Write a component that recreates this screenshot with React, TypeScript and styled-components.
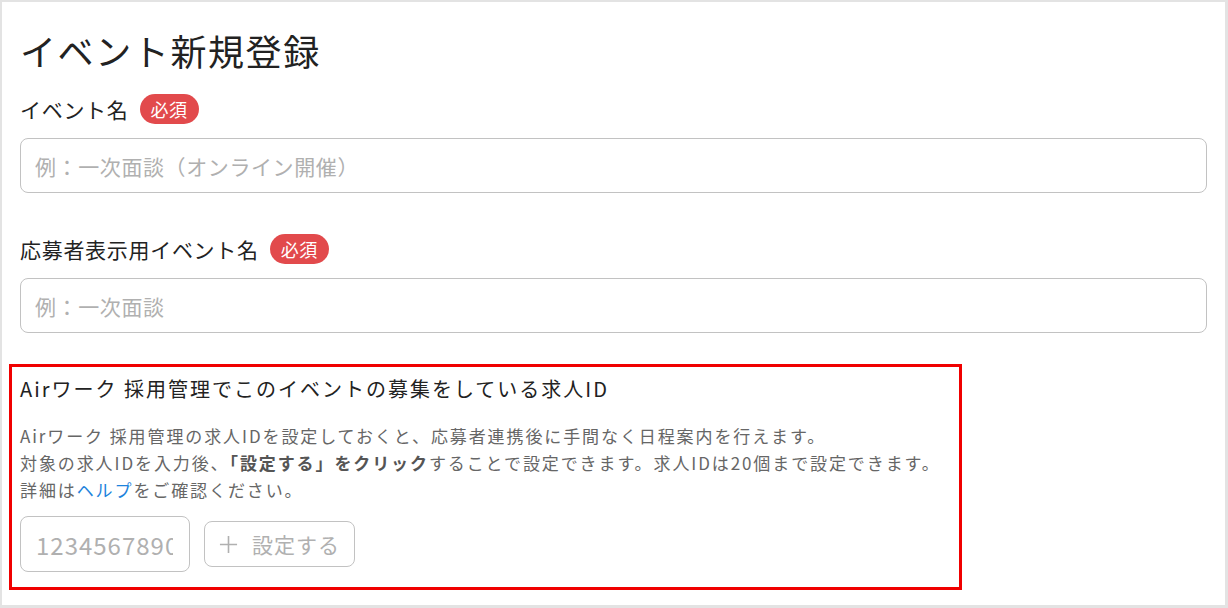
import React from "react";
import styled, { createGlobalStyle } from "styled-components";

const GlobalStyle = createGlobalStyle`
  html, body {
    margin: 0;
    padding: 0;
    background: #ffffff;
  }
  body {
    font-family: "Noto Sans CJK JP", "Noto Sans", sans-serif;
    color: #222222;
  }
`;

const Frame = styled.div`
  box-sizing: border-box;
  width: 1228px;
  height: 608px;
  border: 2px solid #e3e3e3;
  border-right-width: 3px;
  border-bottom-width: 3px;
  padding: 24px 18px 0 18px;
  overflow: hidden;
`;

const Title = styled.h1`
  margin: 0;
  font-size: 36px;
  font-weight: 400;
  line-height: 48px;
  letter-spacing: 1.6px;
  color: #222222;
`;

const LabelRow = styled.div<{ $gap: number }>`
  display: flex;
  align-items: center;
  gap: 11px;
  margin-top: ${(p) => p.$gap}px;
  height: 30px;
`;

const Label = styled.span`
  font-size: 21px;
  letter-spacing: 0.7px;
  color: #222222;
`;

const Required = styled.span`
  display: inline-flex;
  align-items: center;
  justify-content: center;
  height: 30px;
  padding: 0 11px;
  border-radius: 15px;
  background: #e24a4c;
  color: #ffffff;
  font-size: 18px;
  letter-spacing: 0.5px;
`;

const TextInput = styled.input<{ $width?: number; $height?: number }>`
  box-sizing: border-box;
  display: block;
  width: ${(p) => (p.$width ? `${p.$width}px` : "100%")};
  height: ${(p) => p.$height ?? 55}px;
  margin-top: 14px;
  padding: 0 14px;
  border: 1.5px solid #c2c2c2;
  border-radius: 8px;
  font-family: inherit;
  font-size: 21px;
  letter-spacing: 0.6px;
  color: #222222;
  outline: none;
  &::placeholder {
    color: #b0b0b0;
  }
`;

const JobSection = styled.section`
  box-sizing: border-box;
  width: 953px;
  margin: 31px 0 0 -11px;
  padding: 8px 8px 15px 8px;
  border: 3px solid #f00000;
`;

const SectionTitle = styled.h2`
  margin: 0;
  font-size: 20px;
  font-weight: 400;
  line-height: 28px;
  letter-spacing: 2px;
  color: #222222;
`;

const Description = styled.p`
  margin: 19px 0 0 0;
  font-size: 17px;
  line-height: 27px;
  letter-spacing: 1.9px;
  color: #666666;
`;

const Strong = styled.strong`
  font-weight: 700;
  color: #555555;
`;

const HelpLink = styled.a`
  color: #1d83dc;
  text-decoration: none;
`;

const IdRow = styled.div`
  display: flex;
  align-items: center;
  gap: 14px;
  margin-top: 13px;
`;

const IdInput = styled(TextInput)`
  margin-top: 0;
  padding: 0 16px 0 15px;
  font-size: 24px;
  letter-spacing: 1px;
`;

const AddButton = styled.button`
  box-sizing: border-box;
  display: inline-flex;
  align-items: center;
  gap: 14px;
  width: 151px;
  height: 46px;
  padding: 0 0 0 14px;
  border: 1.5px solid #c2c2c2;
  border-radius: 8px;
  background: #ffffff;
  font-family: inherit;
  font-size: 21px;
  letter-spacing: 1px;
  color: #b0b0b0;
  cursor: pointer;
`;

function PlusIcon() {
  return (
    <svg width="19" height="19" viewBox="0 0 20 20" fill="none">
      <path d="M10 1v18M1 10h18" stroke="#b0b0b0" strokeWidth="1.7" />
    </svg>
  );
}

export default function App() {
  return (
    <>
      <GlobalStyle />
      <Frame>
        <Title>イベント新規登録</Title>

        <LabelRow $gap={20}>
          <Label>イベント名</Label>
          <Required>必須</Required>
        </LabelRow>
        <TextInput placeholder="例：一次面談（オンライン開催）" />

        <LabelRow $gap={41}>
          <Label>応募者表示用イベント名</Label>
          <Required>必須</Required>
        </LabelRow>
        <TextInput placeholder="例：一次面談" />

        <JobSection>
          <SectionTitle>
            Airワーク 採用管理でこのイベントの募集をしている求人ID
          </SectionTitle>
          <Description>
            Airワーク 採用管理の求人IDを設定しておくと、応募者連携後に手間なく日程案内を行えます。
            <br />
            対象の求人IDを入力後、<Strong>「設定する」をクリック</Strong>
            することで設定できます。求人IDは20個まで設定できます。
            <br />
            詳細は<HelpLink href="#">ヘルプ</HelpLink>をご確認ください。
          </Description>
          <IdRow>
            <IdInput $width={170} $height={56} placeholder="1234567890" />
            <AddButton type="button">
              <PlusIcon />
              設定する
            </AddButton>
          </IdRow>
        </JobSection>
      </Frame>
    </>
  );
}
